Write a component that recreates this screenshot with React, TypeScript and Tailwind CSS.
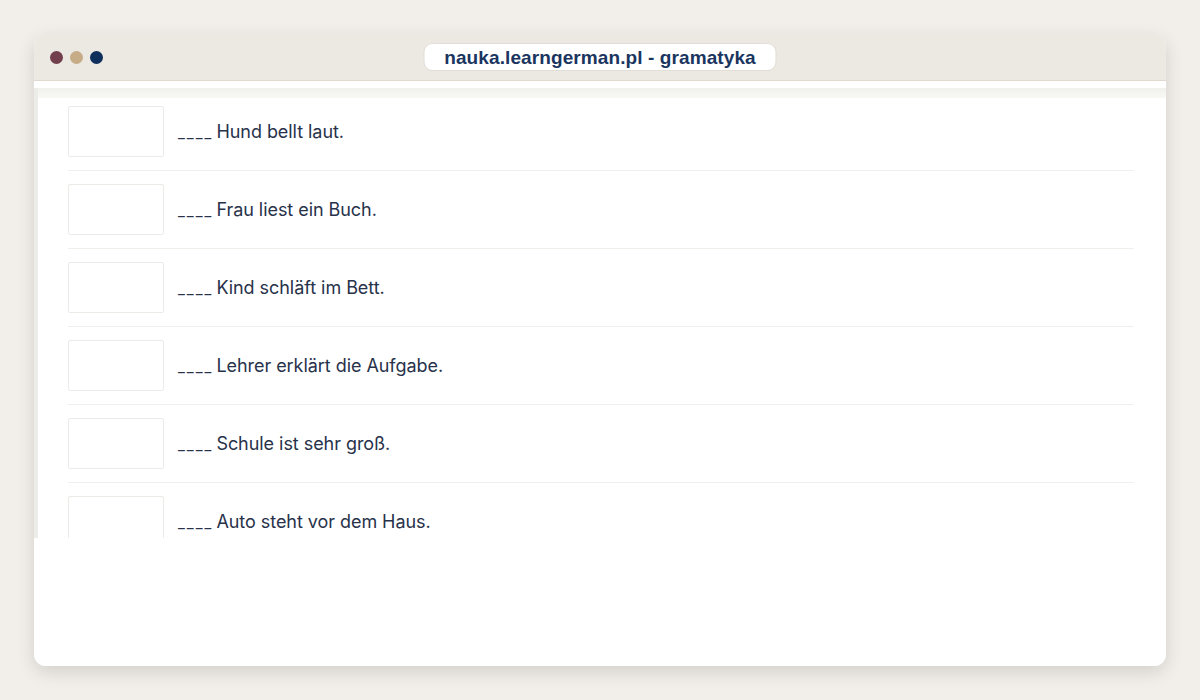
import React from "react";

const rows = [
  "Hund bellt laut.",
  "Frau liest ein Buch.",
  "Kind schläft im Bett.",
  "Lehrer erklärt die Aufgabe.",
  "Schule ist sehr groß.",
  "Auto steht vor dem Haus.",
];

export default function App() {
  return (
    <div className="w-[1200px] h-[700px] bg-[#f2efea] p-[34px]" style={{ fontFamily: '"Liberation Sans", Arial, sans-serif' }}>
      <div className="w-full h-full rounded-[12px] bg-white shadow-[0_6px_18px_rgba(0,0,0,0.13)] flex flex-col overflow-hidden">
        <div className="h-[47px] shrink-0 bg-[#ece9e3] border-b border-[#e0d9cf] relative flex items-center px-[16px]">
          <div className="flex gap-[7px]">
            <span className="w-[13px] h-[13px] rounded-full bg-[#723f4c]" />
            <span className="w-[13px] h-[13px] rounded-full bg-[#c7ac88]" />
            <span className="w-[13px] h-[13px] rounded-full bg-[#0e2f5c]" />
          </div>
          <div className="absolute left-1/2 -translate-x-1/2 top-[9px] w-[353px] h-[28px] bg-white rounded-[9px] border border-[#e2ddd5] flex items-center justify-center">
            <span className="text-[19px] font-bold text-[#1a3560] leading-none tracking-[0.1px]">nauka.learngerman.pl - gramatyka</span>
          </div>
        </div>
        <div className="flex-1 bg-white">
          <div className="h-[457px] overflow-hidden pt-[7px]">
            <div className="h-full flex flex-col bg-white border-l-[4px] border-[#ecece8]">
              <div className="h-[10px] shrink-0 bg-gradient-to-b from-[#f1f1ec] to-[#f8f8f5]" />
              <div className="flex flex-col pl-[30px] pt-[8px] pr-[32px]" style={{ fontFamily: 'Inter, "Open Sans", sans-serif' }}>
                {rows.map((r, i) => (
                  <div key={i} className={`flex items-center gap-[14px] ${i < rows.length - 1 ? "border-b border-[#efefec]" : ""} pb-[13px] ${i > 0 ? "pt-[13px]" : ""}`}>
                    <div className="w-[96px] h-[51px] shrink-0 border border-[#ebebe8] rounded-[2px] bg-white" />
                    <span className="text-[18px] text-[#28324a] tracking-[-0.05px]">
                      <span className="text-[15px] tracking-[2px] mr-[-2px]">____</span> {r}
                    </span>
                  </div>
                ))}
              </div>
            </div>
          </div>
        </div>
      </div>
    </div>
  );
}
